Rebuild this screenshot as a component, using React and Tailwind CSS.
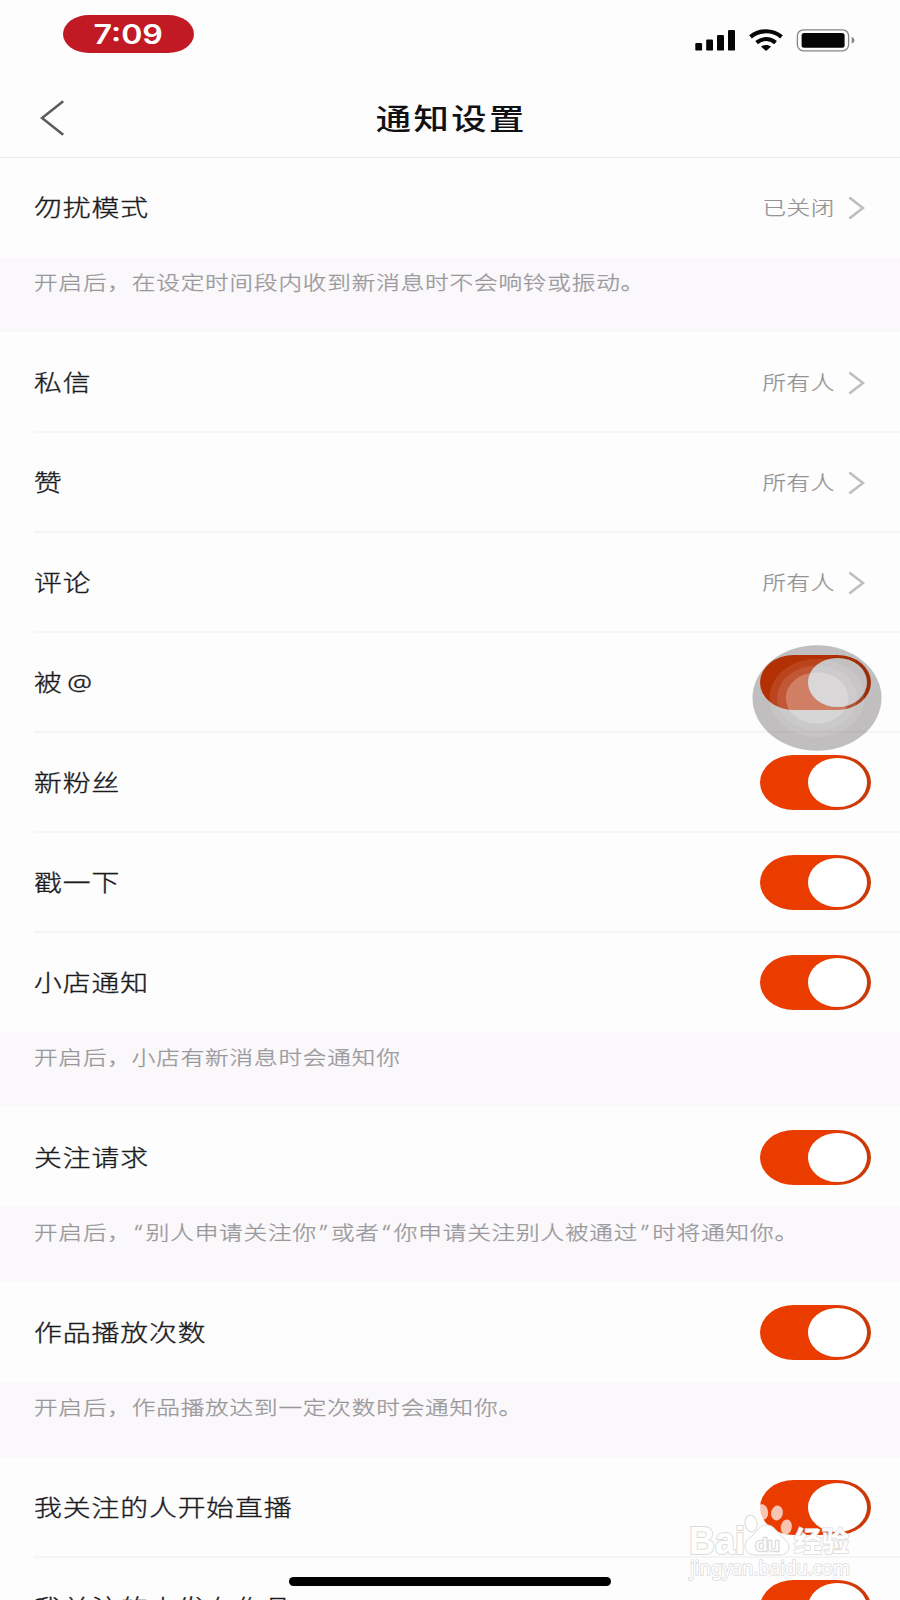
const sections = [
  {
    rows: [{ label: '勿扰模式', value: '已关闭' }],
    hint: '开启后，在设定时间段内收到新消息时不会响铃或振动。'
  },
  {
    rows: [
      { label: '私信', value: '所有人' },
      { label: '赞', value: '所有人' },
      { label: '评论', value: '所有人' },
      { label: '被 @', touch: true },
      { label: '新粉丝' },
      { label: '戳一下' },
      { label: '小店通知' }
    ],
    hint: '开启后，小店有新消息时会通知你'
  },
  {
    rows: [{ label: '关注请求' }],
    hint: '开启后，“别人申请关注你”或者“你申请关注别人被通过”时将通知你。'
  },
  {
    rows: [{ label: '作品播放次数' }],
    hint: '开启后，作品播放达到一定次数时会通知你。'
  },
  {
    rows: [{ label: '我关注的人开始直播' }, { label: '我关注的人发布作品' }]
  }
];

function StatusBar() {
  return (
    <div className="flex h-[77px] shrink-0 items-start justify-between pl-[63px] pr-[45px] pt-[15px]">
      <div className="flex h-[38px] w-[131px] items-center justify-center rounded-[26px/19px] bg-[#c21a25]">
        <span className="inline-block scale-x-[1.19] font-['Inter',sans-serif] text-[27px] leading-none font-semibold text-white">
          7:09
        </span>
      </div>
      <svg className="mt-[13px] h-[24px] w-[161px]" viewBox="694 28 161 24">
        {/* Signal */}
        <g fill="#060607">
          <rect x="695.3" y="43" width="6.8" height="7.6" rx="1.2" />
          <rect x="706.2" y="39.6" width="6.8" height="11" rx="1.2" />
          <rect x="717" y="35" width="7" height="15.6" rx="1.2" />
          <rect x="728" y="30" width="7" height="20.6" rx="1.2" />
        </g>
        {/* Wifi */}
        <g fill="none" stroke="#060607" strokeWidth="4.2">
          <path d="M750.5 36.8C759.5 29.4 772.5 29.4 781.5 36.8" />
          <path d="M756.6 42.6C762.5 38 769.7 38 775.6 42.6" />
        </g>
        <path d="M761 46.6C764 44.3 768.2 44.3 771.2 46.6L766.1 50.9Z" fill="#060607" />
        {/* Battery */}
        <rect x="797.4" y="29.8" width="51.2" height="21" rx="6" fill="none" stroke="#858486" strokeWidth="1.3" />
        <rect x="801.6" y="33" width="43" height="14.8" rx="2.5" fill="#060607" />
        <path d="M851.7 37C855.3 38.2 855.3 42.4 851.7 43.6Z" fill="#858486" />
      </svg>
    </div>
  );
}

function Toggle({ touch }) {
  return (
    <div className="relative mr-[29px] flex h-[55px] w-[111px] items-center justify-end rounded-[34px/27.5px] bg-linear-to-r from-[#eb3c00] from-60% to-[#cb3908] to-90% pr-[4px]">
      <div className="h-[49px] w-[59.5px] rounded-[50%] bg-white" />
      {touch && (
        <svg className="absolute -top-[10px] -left-[8.5px] h-[106px] w-[130px]" viewBox="0 0 130 106">
          <ellipse cx="65" cy="53" rx="64.5" ry="52.7" fill="#140a10" fillOpacity="0.26" />
          <ellipse cx="65" cy="53" rx="47.5" ry="39.2" fill="#fff" fillOpacity="0.1" />
          <ellipse cx="65" cy="53" rx="40" ry="32.5" fill="#fff" fillOpacity="0.1" />
          <ellipse cx="65" cy="53" rx="31.3" ry="25.6" fill="#fff" fillOpacity="0.24" />
        </svg>
      )}
    </div>
  );
}

function Row({ row, last }) {
  return (
    <div className="relative flex h-[100px] shrink-0 items-center justify-between pl-[34px]">
      {!last && <div className="absolute right-0 -bottom-px left-[34px] h-[2px] bg-[#f5f4f6]" />}
      <span className="mt-[2px] origin-left scale-x-[1.22] font-['Noto_Sans','Noto_Sans_CJK_SC',sans-serif] text-[22.8px] leading-none font-light tracking-[0.75px] whitespace-pre text-[#1b1a1d] [word-spacing:-3px] [-webkit-text-stroke:0.35px]">
        {row.label}
      </span>
      {row.value ? (
        <div className="flex items-center pr-[35px]">
          <span className="mr-[13px] mb-[1px] origin-right scale-x-[1.21] text-[19.5px] leading-none font-light tracking-[0.5px] text-[#939295] [-webkit-text-stroke:0.25px]">
            {row.value}
          </span>
          <svg className="mt-[1px] h-[24px] w-[17px]" viewBox="0 0 17 24" fill="none" stroke="#bebdbf" strokeWidth="2.6">
            <path d="M1.3 1.5L15 12L1.3 22.5" />
          </svg>
        </div>
      ) : (
        <Toggle touch={row.touch} />
      )}
    </div>
  );
}

function Hint({ text }) {
  return (
    <p className="h-[75px] bg-[#faf8fb] pt-[16px] pl-[34px] font-['Noto_Sans','Noto_Sans_CJK_SC',sans-serif] text-[19.5px] leading-none font-light tracking-[0.7px] whitespace-nowrap text-[#98979a] [-webkit-text-stroke:0.3px]">
      <span className="inline-block origin-left scale-x-[1.21]">
        {text.split(/([“”])/).map((part, i) =>
          part === '“' || part === '”' ? (
            <span key={i} className="px-[2.4px]">{part}</span>
          ) : (
            part
          )
        )}
      </span>
    </p>
  );
}

function Watermark() {
  return (
    <svg
      className="absolute top-[1500px] left-[686px] h-[86px] w-[168px]"
      viewBox="686 1500 168 86"
      fill="#fff"
      stroke="#dcdbdc"
      strokeWidth="1"
    >
      <g fillOpacity="0.7">
        <ellipse cx="751" cy="1523.5" rx="6" ry="8.3" transform="rotate(-10 751 1523.5)" />
        <ellipse cx="762.5" cy="1512" rx="5.6" ry="7.8" stroke="none" transform="rotate(-8 762.5 1512)" />
        <ellipse cx="777" cy="1513" rx="5.9" ry="7.5" stroke="none" transform="rotate(12 777 1513)" />
        <ellipse cx="786.3" cy="1527" rx="5.5" ry="7.6" stroke="none" transform="rotate(10 786.3 1527)" />
      </g>
      <path
        fillOpacity="0.9"
        d="M767 1525C773 1525 776 1530 780 1535C785 1540 789 1542 789 1547C789 1552 785 1555 780 1555H755C749 1555 745 1551 745 1546C745 1540 751 1538 755 1533C759 1528 761 1525 767 1525Z"
      />
      <g fontFamily="'Liberation Sans', sans-serif" fontWeight="700" paintOrder="stroke">
        <text x="689" y="1554" fontSize="38" textLength="56" lengthAdjust="spacingAndGlyphs" strokeWidth="2">Bai</text>
        <text x="755.5" y="1550.5" fontSize="19" fontWeight="400" textLength="24" lengthAdjust="spacingAndGlyphs" strokeWidth="2.4">du</text>
      </g>
      <text
        x="794"
        y="1552"
        fontFamily="'Noto Sans CJK SC', sans-serif"
        fontWeight="700"
        fontSize="28"
        textLength="55"
        lengthAdjust="spacingAndGlyphs"
        paintOrder="stroke"
        strokeWidth="1.6"
      >
        经验
      </text>
      <text
        x="690"
        y="1575"
        fontFamily="'Noto Sans', sans-serif"
        fontSize="19"
        textLength="160"
        lengthAdjust="spacingAndGlyphs"
        paintOrder="stroke"
        strokeWidth="1.6"
      >
        jingyan.baidu.com
      </text>
    </svg>
  );
}

export default function App() {
  return (
    <div className="relative flex h-[1600px] w-[900px] flex-col overflow-hidden bg-[#fdfdfd] font-['Noto_Sans_CJK_SC',sans-serif]">
      <StatusBar />

      {/* Header */}
      <header className="grid h-[81px] shrink-0 grid-cols-[100px_1fr_100px] items-center border-b border-[#ebeaec]">
        <svg className="mt-[2px] ml-[40px] h-[36px] w-[25px]" viewBox="0 0 25 36" fill="none" stroke="#5c5b5e" strokeWidth="2.6">
          <path d="M23.2 1.2L2 18L23.2 34.8" />
        </svg>
        <h1 className="scale-x-[1.22] pl-[2px] text-center text-[29px] leading-none font-medium tracking-[1.9px] text-[#111013]">
          通知设置
        </h1>
      </header>

      {/* Settings list */}
      <main className="-mt-px flex shrink-0 flex-col">
        {sections.map((section, i) => (
          <section key={i}>
            {section.rows.map((row, j) => (
              <Row key={row.label} row={row} last={j === section.rows.length - 1} />
            ))}
            {section.hint && <Hint text={section.hint} />}
          </section>
        ))}
      </main>

      <Watermark />
      <div className="absolute top-[1577px] left-[289px] h-[9px] w-[322px] rounded-full bg-black" />
    </div>
  );
}
